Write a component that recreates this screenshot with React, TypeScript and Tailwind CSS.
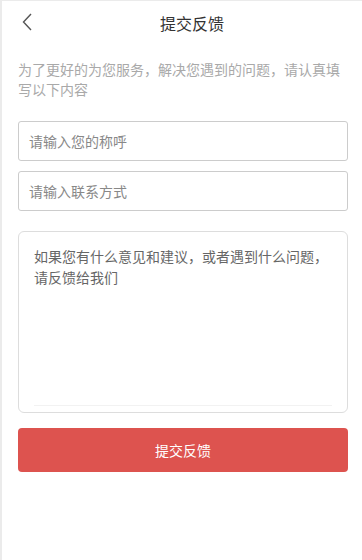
import React from "react";

const font = { fontFamily: '"Microsoft YaHei", "Noto Sans CJK SC", "Noto Sans", sans-serif' };

export default function App() {
  return (
    <div
      className="min-h-[560px] w-[362px] bg-white border-l-2 border-t border-[#ebebeb] text-[14px]"
      style={font}
    >
      <div className="relative flex h-[43px] items-center justify-center pl-[20px]">
        <svg
          className="absolute left-[20px] top-[12px]"
          width="10"
          height="18"
          viewBox="0 0 10 18"
          fill="none"
        >
          <path d="M9 1 L1.5 9 L9 17" stroke="#555" strokeWidth="1.4" />
        </svg>
        <span className="text-[16px] text-[#333]">提交反馈</span>
      </div>

      <div className="pl-[16px] pr-[14px]">
        <p className="pt-[15px] text-[14px] leading-[20px] text-[#a9a9a9]">
          为了更好的为您服务，解决您遇到的问题，请认真填写以下内容
        </p>

        <div className="mt-[22px] flex h-[40px] items-center rounded-[3px] border border-[#cccccc] px-[10px] text-[#888]">
          请输入您的称呼
        </div>
        <div className="mt-[10px] flex h-[40px] items-center rounded-[3px] border border-[#cccccc] px-[10px] text-[#888]">
          请输入联系方式
        </div>

        <div className="mt-[20px] flex h-[182px] flex-col rounded-[6px] border border-[#dddddd] px-[15px] pt-[14px] pb-[6px]">
          <div className="flex-1 border-b border-[#f2f2f2] text-[14px] leading-[21px] text-[#666]">
            如果您有什么意见和建议，或者遇到什么问题，请反馈给我们
          </div>
        </div>

        <button className="mt-[15px] flex h-[44px] w-full items-center justify-center rounded-[4px] bg-[#dd534f] text-[14px] text-white">
          提交反馈
        </button>
      </div>
    </div>
  );
}
